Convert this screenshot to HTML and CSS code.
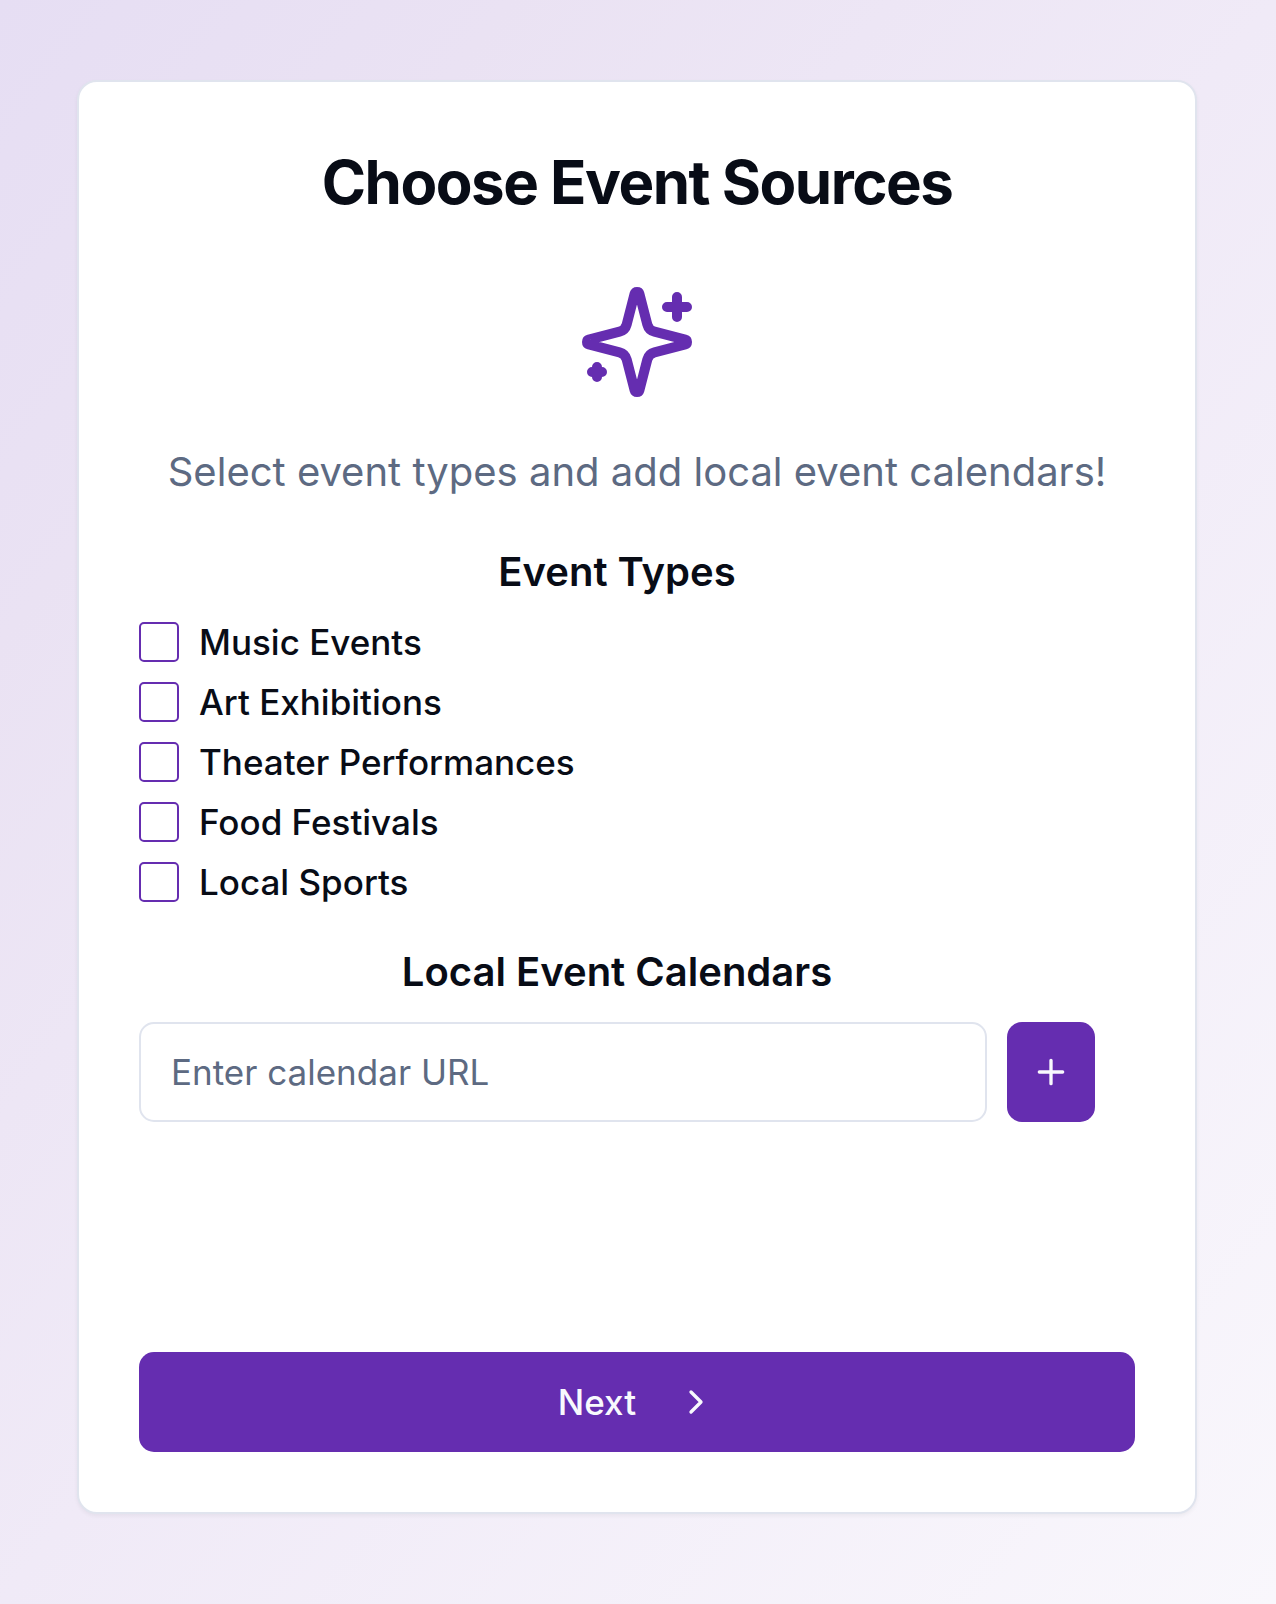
FILE: index.html
```html
<!DOCTYPE html>
<html lang="en">
<head>
<meta charset="utf-8">
<title>Choose Event Sources</title>
<link rel="stylesheet" href="styles.css">
</head>
<body>
<main class="card">
  <h1 class="title">Choose Event Sources</h1>
  <svg class="sparkles" viewBox="0 0 24 24"><path d="M9.937 15.5A2 2 0 0 0 8.5 14.063l-6.135-1.582a.5.5 0 0 1 0-.962L8.5 9.936A2 2 0 0 0 9.937 8.5l1.582-6.135a.5.5 0 0 1 .963 0L14.063 8.5A2 2 0 0 0 15.5 9.937l6.135 1.581a.5.5 0 0 1 0 .964L15.5 14.063a2 2 0 0 0-1.437 1.437l-1.582 6.135a.5.5 0 0 1-.963 0z"/><path d="M20 3v4M22 5h-4M4 17v2M5 18H3"/></svg>
  <p class="subtitle">Select event types and add local event calendars!</p>
  <div class="content">
    <section class="section">
      <h2 class="heading">Event Types</h2>
      <div class="options">
        <label class="option"><input class="checkbox" type="checkbox">Music Events</label>
        <label class="option"><input class="checkbox" type="checkbox">Art Exhibitions</label>
        <label class="option"><input class="checkbox" type="checkbox">Theater Performances</label>
        <label class="option"><input class="checkbox" type="checkbox">Food Festivals</label>
        <label class="option"><input class="checkbox" type="checkbox">Local Sports</label>
      </div>
    </section>
    <section class="section">
      <h2 class="heading">Local Event Calendars</h2>
      <div class="url-row">
        <input class="url" type="text" placeholder="Enter calendar URL">
        <button class="button add" aria-label="Add calendar"><svg class="icon" viewBox="0 0 24 24"><path d="M5 12h14M12 5v14"/></svg></button>
      </div>
    </section>
  </div>
  <button class="button next">Next<svg class="icon" viewBox="0 0 24 24"><path d="m9 18 6-6-6-6"/></svg></button>
</main>
</body>
</html>
```
FILE: styles.css
```css
* { box-sizing: border-box; }
body {
  margin: 0;
  height: 1604px;
  padding: 80px 79px 90px 77px;
  display: flex;
  font-family: Inter, sans-serif;
  color: #080c16;
  background: linear-gradient(to bottom right, #e6def3, #eae2f3 20%, #f0eaf7 50%, #f9f7fc);
}
.card {
  flex: 1;
  display: flex;
  flex-direction: column;
  padding: 60px;
  background: #fff;
  border: 2px solid #e0e4ee;
  border-radius: 20px;
  box-shadow: 0 2px 4px rgb(0 0 0 / 5%);
}
.title {
  margin: 0 0 60px;
  font-size: 60px;
  line-height: 80px;
  font-weight: 700;
  letter-spacing: -1.5px;
  text-align: center;
}
.sparkles, .icon {
  flex: none;
  fill: none;
  stroke: currentColor;
  stroke-width: 2;
  stroke-linecap: round;
  stroke-linejoin: round;
}
.sparkles {
  width: 120px;
  height: 120px;
  align-self: center;
  color: #652db0;
}
.icon { width: 40px; height: 40px; }
.subtitle {
  margin: 40px 0;
  font-size: 40px;
  line-height: 60px;
  text-align: center;
  color: #5d6a82;
}
.content {
  flex: 1;
  display: flex;
  flex-direction: column;
  gap: 40px;
  padding-right: 40px;
}
.heading {
  margin: 0 0 20px;
  font-size: 40px;
  line-height: 60px;
  font-weight: 600;
  text-align: center;
}
.options { display: flex; flex-direction: column; gap: 20px; }
.option {
  display: flex;
  align-items: center;
  gap: 20px;
  height: 40px;
  font-size: 35px;
  line-height: 40px;
  font-weight: 500;
}
.checkbox {
  appearance: none;
  width: 40px;
  height: 40px;
  margin: 0;
  border: 2px solid #652db0;
  border-radius: 5px;
}
.url-row { display: flex; gap: 20px; }
.url {
  flex: 1;
  min-width: 0;
  height: 100px;
  padding: 0 30px;
  border: 2px solid #e0e4ee;
  border-radius: 15px;
  font: 400 35px Inter, sans-serif;
  background: #fff;
}
.url::placeholder { color: #5d6a82; opacity: 1; }
.button {
  display: flex;
  align-items: center;
  justify-content: center;
  height: 100px;
  padding: 0;
  border: 0;
  border-radius: 15px;
  background: #652db0;
  color: #f8f9fd;
  font: 500 35px Inter, sans-serif;
}
.add { width: 88px; }
.next { gap: 40px; }
```
